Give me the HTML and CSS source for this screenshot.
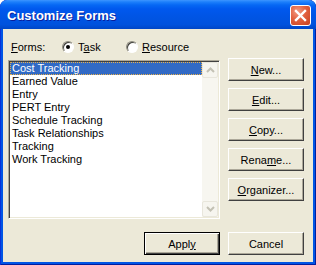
FILE: index.html
```html
<!DOCTYPE html>
<html lang="en">

<head>
    <meta charset="UTF-8">
    <title>Customize Forms</title>
    <link rel="stylesheet" href="styles.css">
</head>

<body>
    <div class="window">
        <!-- Title bar -->
        <div class="titlebar">
            <span class="title">Customize Forms</span>
            <div class="close">
                <svg width="13" height="13" viewBox="0 0 13 13">
                    <path d="M2 2 L11 11 M11 2 L2 11" stroke="#fff" stroke-width="2.4" stroke-linecap="square" fill="none"/>
                </svg>
            </div>
        </div>

        <div class="client">
            <!-- Forms radio row -->
            <div class="forms-row">
                <span class="forms-label"><u>F</u>orms:</span>
                <label class="radio checked"><span class="dot"></span><span>T<u>a</u>sk</span></label>
                <label class="radio"><span class="dot"></span><span><u>R</u>esource</span></label>
            </div>

            <div class="main">
                <!-- Form list -->
                <div class="listbox">
                    <ul class="items">
                        <li class="selected">Cost Tracking</li>
                        <li>Earned Value</li>
                        <li>Entry</li>
                        <li>PERT Entry</li>
                        <li>Schedule Tracking</li>
                        <li>Task Relationships</li>
                        <li>Tracking</li>
                        <li>Work Tracking</li>
                    </ul>
                    <div class="scrollbar">
                        <div class="arrow">
                            <svg width="9" height="6" viewBox="0 0 9 6"><path d="M1 5 L4.5 1.5 L8 5" stroke="#C3C1B4" stroke-width="2" fill="none"/></svg>
                        </div>
                        <div class="track"></div>
                        <div class="arrow">
                            <svg width="9" height="6" viewBox="0 0 9 6"><path d="M1 1 L4.5 4.5 L8 1" stroke="#C3C1B4" stroke-width="2" fill="none"/></svg>
                        </div>
                    </div>
                </div>

                <!-- Side buttons -->
                <div class="side-buttons">
                    <button><u>N</u>ew...</button>
                    <button><u>E</u>dit...</button>
                    <button><u>C</u>opy...</button>
                    <button>Rena<u>m</u>e...</button>
                    <button><u>O</u>rganizer...</button>
                </div>
            </div>

            <!-- Bottom buttons -->
            <div class="bottom-row">
                <button class="default">Appl<u>y</u></button>
                <button>Cancel</button>
            </div>
        </div>
    </div>
</body>

</html>
```

FILE: styles.css
```css
html,
body {
    margin: 0;
    width: 316px;
    height: 265px;
    overflow: hidden;
    background: #fff;
}

.window {
    width: 316px;
    height: 265px;
    display: flex;
    flex-direction: column;
    background: #0055E5;
    border-radius: 7px 7px 0 0;
    box-shadow: inset 1px 0 #0831D9, inset -1px 0 #001EA0, inset 0 -1px #001EA0;
    overflow: hidden;
}

.titlebar {
    height: 29px;
    flex: none;
    display: flex;
    align-items: center;
    padding-left: 7px;
    box-sizing: border-box;
    background: linear-gradient(#3D95FF 0, #1C7FFB 2px, #0668F4 5px, #0058EE 9px, #0055E5 55%, #0052DD 85%, #0046C6 100%);
    border-radius: 7px 7px 0 0;
}

.title {
    flex: 1;
    font-family: "Liberation Sans", Arial, sans-serif;
    font-weight: bold;
    font-size: 13px;
    color: #fff;
    text-shadow: 1px 1px #0A1E9C;
    padding-top: 1px;
}

.close {
    width: 19px;
    height: 19px;
    margin-right: 5px;
    margin-top: 1px;
    display: flex;
    align-items: center;
    justify-content: center;
    border: 1px solid #fff;
    border-radius: 3px;
    background: radial-gradient(circle at 35% 30%, #F39C84 0, #E2613F 45%, #C8401E 100%);
}

.client {
    flex: 1;
    margin: 0 3px 3px;
    background: #ECE9D8;
    padding: 11px 9px 0 5px;
    font-family: "Liberation Sans", Arial, sans-serif;
    font-size: 11px;
    color: #000;
}

/* Forms row */
.forms-row {
    display: flex;
    align-items: center;
    height: 14px;
    padding-left: 3px;
}

.forms-label {
    width: 51px;
}

.radio {
    display: flex;
    align-items: center;
    gap: 4px;
    width: 64px;
}

.dot {
    width: 12px;
    height: 12px;
    box-sizing: border-box;
    border-radius: 50%;
    background: #fff;
    border: 1px solid;
    border-color: #8D8B7E #fff #fff #8D8B7E;
    box-shadow: inset 1px 1px #3F3F3A;
    position: relative;
}

.radio.checked .dot::after {
    content: "";
    position: absolute;
    left: 3px;
    top: 3px;
    width: 4px;
    height: 4px;
    border-radius: 50%;
    background: #000;
}

/* Main area */
.main {
    display: flex;
    gap: 8px;
    margin-top: 6px;
}

.listbox {
    width: 212px;
    height: 159px;
    box-sizing: border-box;
    display: flex;
    background: #fff;
    border: 1px solid;
    border-color: #ACA899 #fff #fff #ACA899;
    box-shadow: inset 1px 1px #404040, inset -1px -1px #ECE9D8;
    padding: 1px;
}

.items {
    list-style: none;
    margin: 0;
    padding: 0;
    flex: 1;
}

.items li {
    height: 13px;
    line-height: 13px;
    padding-left: 2px;
}

.items li.selected {
    background: #316AC5;
    color: #fff;
    outline: 1px dotted #E8B04A;
    outline-offset: -1px;
}

.scrollbar {
    width: 16px;
    display: flex;
    flex-direction: column;
    background: #F7F6F0;
}

.arrow {
    height: 16px;
    box-sizing: border-box;
    border: 1px solid #E8E6DC;
    border-radius: 2px;
    background: #F6F5EF;
    display: flex;
    align-items: center;
    justify-content: center;
}

.track {
    flex: 1;
}

/* Buttons */
button {
    width: 76px;
    height: 23px;
    padding: 0;
    font-family: "Liberation Sans", Arial, sans-serif;
    font-size: 11px;
    color: #000;
    background: #ECE9D8;
    border: 1px solid;
    border-color: #fff #404040 #404040 #fff;
    box-shadow: inset -1px -1px #ACA899;
}

.side-buttons {
    display: flex;
    flex-direction: column;
    gap: 7px;
    margin-top: -2px;
}

.bottom-row {
    display: flex;
    justify-content: flex-end;
    gap: 8px;
    margin-top: 13px;
}

button.default {
    border-color: #000;
    box-shadow: inset 1px 1px #fff, inset -1px -1px #404040, inset -2px -2px #ACA899;
}
```
